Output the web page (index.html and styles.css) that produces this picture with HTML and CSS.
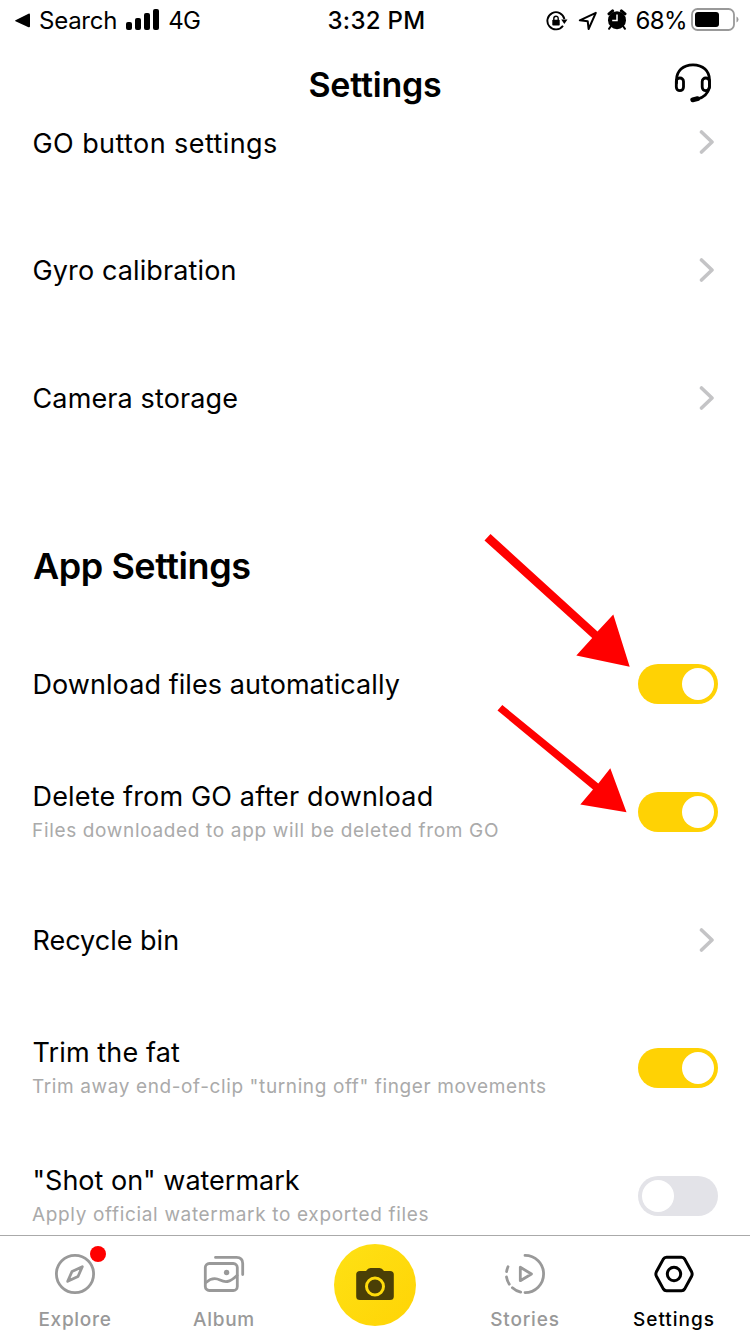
FILE: index.html
```html
<!DOCTYPE html>
<html lang="en">
<head>
<meta charset="utf-8">
<title>Settings</title>
<link rel="stylesheet" href="styles.css">
</head>
<body>
<div class="screen">
  <div class="status">
    <div class="status-left">
      <svg class="back" width="17" height="16" viewBox="0 0 17 16"><path d="M1.5 7.3 14.5.7Q16 .2 16 1.8V13.2Q16 14.8 14.5 14.2L1.5 8.3Q.6 7.8 1.5 7.3Z"/></svg>
      <span class="carrier">Search</span>
      <svg class="signal" width="34" height="22" viewBox="0 0 34 22"><rect x="0" y="13" width="6" height="8" rx="2"/><rect x="9" y="9" width="6" height="12" rx="2"/><rect x="18" y="4" width="6" height="17" rx="2"/><rect x="27" y="0" width="6" height="21" rx="2"/></svg>
      <span class="network">4G</span>
    </div>
    <span class="clock">3:32 PM</span>
    <div class="status-right">
      <svg class="lock" width="22" height="20" viewBox="0 0 22 20"><path d="M17 14.800A8.600 8.600 0 1 1 18.400 8" fill="none" stroke="#000" stroke-width="1.900"/><path d="M15.200 8.500H21.500L18.300 13Z"/><rect x="6.300" y="8.800" width="7.400" height="5.800" rx=".8"/><path d="M7.800 9V7.400a2.200 2.200 0 0 1 4.400 0V9" fill="none" stroke="#000" stroke-width="1.400"/></svg>
      <svg class="location" width="20" height="20" viewBox="0 0 20 20"><path d="M1.800 9.300 17.800 1.800 10.600 18 9.700 10.200Z" fill="none" stroke="#000" stroke-width="2" stroke-linejoin="round"/></svg>
      <svg class="alarm" width="20" height="22" viewBox="0 0 20 22"><circle cx="10" cy="11.200" r="9"/><path d="M2 4.800 5.600 1.900M14.400 1.900 18 4.800" stroke="#000" stroke-width="3" stroke-linecap="round"/><path d="m4 17-2 2.800M16 17l2 2.800" stroke="#000" stroke-width="2" stroke-linecap="round"/><path d="M10 5.500V11.400H5.200" fill="none" stroke="#fff" stroke-width="1.500"/></svg>
      <span class="percent">68%</span>
      <svg class="battery" width="48" height="24" viewBox="0 0 48 24"><rect x="1" y="1" width="42" height="21" rx="5.500" fill="none" stroke="#999" stroke-width="1.800"/><rect x="4" y="4" width="24" height="15" rx="3"/><path d="M45.500 8.500q2 .8 2 3t-2 3Z" fill="#999"/></svg>
    </div>
  </div>
  <header class="header">
    <h1 class="title">Settings</h1>
    <svg class="headset" width="40" height="42" viewBox="0 0 40 42" fill="none" stroke="#000" stroke-width="2.800" stroke-linecap="round" stroke-linejoin="round"><path d="M3.500 21v-3C3.500 9 10 2.800 20 2.800S36.500 9 36.500 18v7C35 31.500 31 35.500 24.500 37"/><rect x="3.300" y="16" width="7.200" height="12.700" rx="3.600"/><rect x="29.200" y="16" width="7.200" height="12.700" rx="3.600"/><path d="M19.700 37.800 24.500 36.700" stroke-width="4.800"/></svg>
  </header>
  <main class="content">
    <section class="group camera">
      <div class="row"><span class="label l-button">GO button settings</span><svg class="chevron" width="16" height="26" viewBox="0 0 16 26"><path d="M2.500 3 13 13 2.500 23"/></svg></div>
      <div class="row"><span class="label l-gyro">Gyro calibration</span><svg class="chevron" width="16" height="26" viewBox="0 0 16 26"><path d="M2.500 3 13 13 2.500 23"/></svg></div>
      <div class="row"><span class="label l-storage">Camera storage</span><svg class="chevron" width="16" height="26" viewBox="0 0 16 26"><path d="M2.500 3 13 13 2.500 23"/></svg></div>
    </section>
    <h2 class="section-title">App Settings</h2>
    <section class="group">
      <div class="row"><span class="label l-auto">Download files automatically</span><span class="toggle on"><span class="knob"></span></span></div>
      <div class="row"><div class="copy"><span class="label l-delete">Delete from GO after download</span><span class="hint h-delete">Files downloaded to app will be deleted from GO</span></div><span class="toggle on"><span class="knob"></span></span></div>
      <div class="row"><span class="label l-bin">Recycle bin</span><svg class="chevron" width="16" height="26" viewBox="0 0 16 26"><path d="M2.500 3 13 13 2.500 23"/></svg></div>
      <div class="row"><div class="copy"><span class="label l-trim">Trim the fat</span><span class="hint h-trim">Trim away end-of-clip "turning off" finger movements</span></div><span class="toggle on"><span class="knob"></span></span></div>
      <div class="row"><div class="copy"><span class="label l-shot">"Shot on" watermark</span><span class="hint h-shot">Apply official watermark to exported files</span></div><span class="toggle"><span class="knob"></span></span></div>
    </section>
  </main>
  <nav class="tabs">
    <div class="tab">
      <div class="icon-wrap"><svg width="42" height="42" viewBox="0 0 42 42" fill="none" stroke="#999" stroke-width="2.800" stroke-linejoin="round"><circle cx="21" cy="21" r="18.600"/><path d="M28.300 13.700 24 23.500 13.700 28.300 18 18.500Z"/></svg><span class="dot"></span></div>
      <span class="tab-label t-explore">Explore</span>
    </div>
    <div class="tab nudge">
      <div class="icon-wrap"><svg width="42" height="42" viewBox="0 0 42 42" fill="none" stroke="#999" stroke-width="2.800" stroke-linecap="round"><rect x="2.300" y="10.500" width="32" height="27" rx="4"/><path d="M12.500 4.400H33.500Q39.700 4.400 39.700 10.500V21.500M3 29.500C8 25 12 24.500 17 27S26 30 34 22.500"/><circle cx="23.600" cy="19.500" r="2.700" fill="#999" stroke="none"/></svg></div>
      <span class="tab-label t-album">Album</span>
    </div>
    <div class="tab camera-tab">
      <div class="shutter"><svg width="38" height="34" viewBox="0 0 38 34"><path d="M4 4H10Q12 1 14.500 1H23.500Q26 1 28 4H34Q37.800 4 37.800 7.500V29.500Q37.800 33 34 33H4Q.2 33 .2 29.500V7.500Q.2 4 4 4Z" fill="#4a3f06"/><circle cx="19" cy="19.500" r="8.500" fill="none" stroke="#fedb0b" stroke-width="3"/></svg></div>
    </div>
    <div class="tab">
      <div class="icon-wrap"><svg width="42" height="42" viewBox="0 0 42 42" fill="none" stroke="#999" stroke-width="2.800" stroke-linecap="round" stroke-linejoin="round"><path d="M21 2.400A18.600 18.600 0 0 1 21 39.600M16.700 39.100A18.600 18.600 0 0 1 8.400 34.700M5.300 31.200A18.600 18.600 0 0 1 2.500 24M2.600 18.500A18.600 18.600 0 0 1 4 13.800M16.300 14.300V27.700L27.500 21Z"/></svg></div>
      <span class="tab-label t-stories">Stories</span>
    </div>
    <div class="tab active nudge">
      <div class="icon-wrap"><svg width="42" height="42" viewBox="0 0 42 42" fill="none" stroke="#000" stroke-width="3" stroke-linejoin="round"><path d="M13.500 4.300H28.500Q30.600 4.300 31.700 6.100L38.600 18.800Q39.700 21 38.600 23.200L31.700 35.900Q30.600 37.700 28.500 37.700H13.500Q11.400 37.700 10.300 35.900L3.400 23.200Q2.300 21 3.400 18.800L10.300 6.100Q11.400 4.300 13.500 4.300Z"/><circle cx="21" cy="21" r="6.700"/></svg></div>
      <span class="tab-label t-settings">Settings</span>
    </div>
  </nav>
  <svg class="arrows" width="750" height="1334" viewBox="0 0 750 1334" fill="#f00"><path d="M484.500 540.500 490.500 534 597.500 631.500 613.300 614.500 629.700 666.700 576.300 655.500 592.200 638Z"/><path d="M497.500 710.500 502.300 705 598.300 783.500 610.300 768.300 626.500 812.300 580.300 804.500 593 789.500Z"/></svg>
</div>
</body>
</html>
```
FILE: styles.css
```css
* { box-sizing: border-box; }
body { margin: 0; background: #fff; color: #000; font-family: Inter, "Liberation Sans", sans-serif; }
svg { display: block; flex: none; }
.screen { position: relative; width: 750px; height: 1334px; overflow: hidden; display: flex; flex-direction: column; }
.status { height: 40px; flex: none; display: grid; grid-template-columns: 1fr auto 1fr; align-items: center; padding: 0 11px 0 14px; font-size: 24px; line-height: 38px; white-space: nowrap; }
.status span { padding-top: 2px; }
.status-left, .status-right { display: flex; align-items: center; }
.status-right { justify-content: flex-end; }
.carrier { margin-left: 8px; letter-spacing: -.25px; }
.back { margin-top: 1px; }
.signal { margin-left: 9px; }
.network { margin-left: 8px; letter-spacing: -.6px; }
.clock { font-weight: 500; letter-spacing: .3px; }
.lock { margin-top: 1px; }
.location { margin-left: 10px; margin-top: 1px; }
.alarm { margin-left: 9px; }
.percent { margin-left: 9px; letter-spacing: -.6px; }
.battery { margin-left: 4px; }
.header { height: 80px; flex: none; display: grid; grid-template-columns: 1fr auto 1fr; align-items: center; padding: 0 37px; }
.title { grid-column: 2; margin: 0; padding-top: 9px; font-size: 34px; font-weight: 600; line-height: 71px; letter-spacing: -.2px; }
.headset { justify-self: end; margin-top: 6px; }
.content { flex: 1; min-height: 0; overflow: hidden; padding: 0 32px; }
.camera { margin-top: -42px; }
.row { height: 128px; display: flex; align-items: center; justify-content: space-between; }
.copy { display: flex; flex-direction: column; padding-top: 4px; }
.label { font-size: 27px; line-height: 34px; white-space: nowrap; padding-left: .5px; }
.row > .label { padding-top: 2px; }
.hint { font-size: 19px; line-height: 34px; color: #aaa; white-space: nowrap; letter-spacing: .66px; }
.h-trim { letter-spacing: .61px; }
.l-button { letter-spacing: .42px; padding-top: 3px !important; }
.l-gyro { letter-spacing: .12px; }
.l-storage { letter-spacing: .13px; }
.l-auto { letter-spacing: .07px; }
.l-delete { letter-spacing: .16px; }
.l-trim { letter-spacing: .12px; }
.chevron { margin-right: 3px; fill: none; stroke: #c4c4c6; stroke-width: 3.6; stroke-linecap: round; stroke-linejoin: round; }
.section-title { margin: 0; height: 158px; padding: 50px 0 0 1px; font-size: 36px; font-weight: 600; line-height: 108px; letter-spacing: -.45px; white-space: nowrap; }
.toggle { flex: none; width: 80px; height: 40px; border-radius: 20px; background: #e3e3e8; padding: 4px; display: flex; }
.toggle.on { background: #ffd204; justify-content: flex-end; }
.knob { width: 32px; height: 32px; border-radius: 50%; background: #fff; }
.tabs { height: 99px; flex: none; border-top: 1px solid #aaa; display: grid; grid-template-columns: repeat(5, 1fr); background: #fff; }
.tab { display: flex; flex-direction: column; align-items: center; padding-top: 17px; color: #999; }
.nudge { padding-right: 2px; }
.active { color: #000; }
.icon-wrap { position: relative; }
.dot { position: absolute; left: 36px; top: -7px; width: 16px; height: 16px; border-radius: 50%; background: #f00; }
.tab-label { margin-top: 11px; font-size: 19px; font-weight: 500; line-height: 28px; letter-spacing: .7px; }
.t-stories { letter-spacing: .8px; }
.t-settings { letter-spacing: 1px; }
.camera-tab { padding-top: 8px; }
.shutter { width: 82px; height: 82px; border-radius: 50%; background: linear-gradient(135deg, #fee115, #ffd405); display: flex; align-items: center; justify-content: center; }
.shutter svg { margin-top: -2px; }
.arrows { position: absolute; left: 0; top: 0; pointer-events: none; }
```
